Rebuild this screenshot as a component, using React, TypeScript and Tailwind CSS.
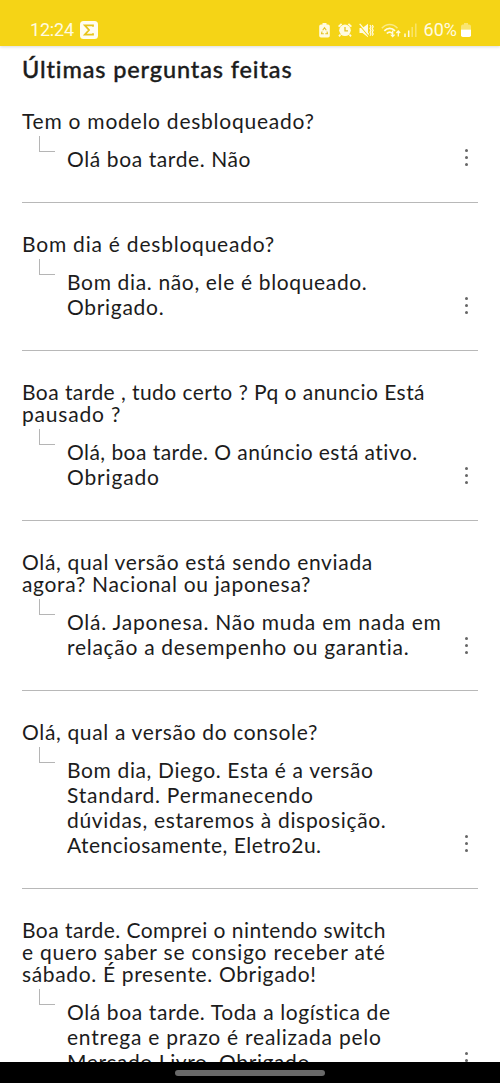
import React from 'react';

interface Line {
  text: string;
  tracking: string;
}

interface Question {
  question: Line[];
  answer: Line[];
}

const questions: Question[] = [
  {
    question: [{ text: 'Tem o modelo desbloqueado?', tracking: 'tracking-[0.75px]' }],
    answer: [{ text: 'Olá boa tarde. Não', tracking: 'tracking-[0.6px]' }],
  },
  {
    question: [{ text: 'Bom dia é desbloqueado?', tracking: 'tracking-[0.78px]' }],
    answer: [
      { text: 'Bom dia. não, ele é bloqueado.', tracking: 'tracking-[0.65px]' },
      { text: 'Obrigado.', tracking: 'tracking-[0.7px]' },
    ],
  },
  {
    question: [
      { text: 'Boa tarde , tudo certo ? Pq o anuncio Está', tracking: 'tracking-[0.44px]' },
      { text: 'pausado ?', tracking: 'tracking-[0.8px]' },
    ],
    answer: [
      { text: 'Olá, boa tarde. O anúncio está ativo.', tracking: 'tracking-[0.45px]' },
      { text: 'Obrigado', tracking: 'tracking-[0.85px]' },
    ],
  },
  {
    question: [
      { text: 'Olá, qual versão está sendo enviada', tracking: 'tracking-[0.67px]' },
      { text: 'agora? Nacional ou japonesa?', tracking: 'tracking-[0.67px]' },
    ],
    answer: [
      { text: 'Olá. Japonesa. Não muda em nada em', tracking: 'tracking-[0.76px]' },
      { text: 'relação a desempenho ou garantia.', tracking: 'tracking-[0.71px]' },
    ],
  },
  {
    question: [{ text: 'Olá, qual a versão do console?', tracking: 'tracking-[0.66px]' }],
    answer: [
      { text: 'Bom dia, Diego. Esta é a versão', tracking: 'tracking-[0.63px]' },
      { text: 'Standard. Permanecendo', tracking: 'tracking-[0.77px]' },
      { text: 'dúvidas, estaremos à disposição.', tracking: 'tracking-[0.68px]' },
      { text: 'Atenciosamente, Eletro2u.', tracking: 'tracking-[0.48px]' },
    ],
  },
  {
    question: [
      { text: 'Boa tarde. Comprei o nintendo switch', tracking: 'tracking-[0.45px]' },
      { text: 'e quero saber se consigo receber até', tracking: 'tracking-[0.79px]' },
      { text: 'sábado. É presente. Obrigado!', tracking: 'tracking-[0.65px]' },
    ],
    answer: [
      { text: 'Olá boa tarde. Toda a logística de', tracking: 'tracking-[0.61px]' },
      { text: 'entrega e prazo é realizada pelo', tracking: 'tracking-[0.76px]' },
      { text: 'Mercado Livro. Obrigado', tracking: 'tracking-[0.6px]' },
    ],
  },
];

function StatusBar() {
  return (
    <header className="relative z-10 flex h-[46px] shrink-0 items-end justify-between bg-[#f5d416] pr-[29px] pb-[7px] pl-[30px] text-[#fffbe0] shadow-[0_1px_3px_rgba(0,0,0,0.15)]">
      <div className="flex items-center gap-[6px]">
        <span className="font-[Roboto] text-[18px] leading-[18px] tracking-[-0.2px]">12:24</span>
        <svg width="18" height="18" viewBox="0 0 18 18">
          <rect width="18" height="18" rx="3.5" fill="#fffdf0" />
          <path d="M13 5.8V4.3H4.8L9 9l-4.2 4.7H13v-1.5" fill="none" stroke="#e8c51a" strokeWidth="1.8" />
        </svg>
      </div>
      <div className="flex items-center">
        {/* Battery saver */}
        <svg width="11" height="15" viewBox="0 0 11 15" className="mr-[8px]">
          <path d="M3.5 0h4v1.5H9A1.8 1.8 0 0 1 10.8 3.3v9.4A1.8 1.8 0 0 1 9 14.5H2A1.8 1.8 0 0 1 .2 12.7V3.3A1.8 1.8 0 0 1 2 1.5h1.5z" fill="currentColor" />
          <path d="m3.7 7.2 1.8-2.5 1.8 2.5M8 8.5l.5 2.3H6.3M4.8 10.8H2.5L3 8.5" fill="none" stroke="#e5c322" strokeWidth="1.1" />
        </svg>
        {/* Alarm */}
        <svg width="14" height="14" viewBox="0 0 14 14" className="mr-[7px]">
          <circle cx="7" cy="7.3" r="5.8" fill="currentColor" />
          <path d="M.6 3.6 3.6.8M13.4 3.6 10.4.8M2.5 11.5 1 13.3M11.5 11.5 13 13.3" stroke="currentColor" strokeWidth="1.8" />
          <path d="M7 4v3.8h3" fill="none" stroke="#e5c322" strokeWidth="1.3" />
        </svg>
        {/* Muted with vibration */}
        <svg width="15" height="15" viewBox="0 0 15 15" className="mr-[7px]">
          <path d="M.5 5h3L9 .8v13.4L3.5 10h-3z" fill="currentColor" />
          <path d="M0 1.5 10.5 14" stroke="#f5d416" strokeWidth="1.2" />
          <path d="m.7.8 9 10.7" stroke="currentColor" strokeWidth="1.3" />
          <path d="m11 2 1 1.8-1 1.8 1 1.8-1 1.8 1 1.8-1 1.8M13.2 2l1 1.8-1 1.8 1 1.8-1 1.8 1 1.8-1 1.8" fill="none" stroke="currentColor" strokeWidth="1.2" />
        </svg>
        {/* Wi-Fi */}
        <svg width="20" height="15" viewBox="0 0 20 15" className="mr-[3px]">
          <path d="M.8 5.2C5.5.3 12 .3 16.5 5.2" fill="none" stroke="currentColor" strokeWidth="1.5" opacity=".55" />
          <path d="M3.3 7.9c3.2-3.3 7.6-3.3 10.7 0M5.8 10.5c1.7-1.8 4-1.8 5.7 0" fill="none" stroke="currentColor" strokeWidth="1.7" />
          <path d="M11.7 7.5v6M9.8 11.6l1.9 2 1.9-2M17.3 13.5V8M15.4 10l1.9-2 1.9 2" fill="none" stroke="currentColor" strokeWidth="1.3" />
        </svg>
        {/* Signal */}
        <svg width="13" height="14" viewBox="0 0 13 14" className="mr-[7px]">
          <path d="M1 10.5V14M4.7 7.5V14" stroke="currentColor" strokeWidth="1.5" />
          <path d="M8.2 4v10M11.8.5V14" stroke="currentColor" strokeWidth="1.4" opacity=".45" />
        </svg>
        <span className="mr-[4px] font-[Roboto] text-[18px] leading-[18px]">60%</span>
        <svg width="10" height="14" viewBox="0 0 10 14">
          <path d="M3 0h4v1.5h1.2Q10 1.5 10 3.5V6.5H0v-3Q0 1.5 1.8 1.5H3z" fill="currentColor" opacity=".45" />
          <path d="M0 6.5h10v5.7q0 1.8-1.8 1.8H1.8Q0 14 0 12.2z" fill="#fff" />
        </svg>
      </div>
    </header>
  );
}

function QuestionItem({ question, answer }: Question) {
  return (
    <li className="shrink-0 border-b border-[#b8b8b8] pb-[31px]">
      <div className="text-[21px] leading-[22px]">
        {question.map((line) => (
          <p key={line.text} className={`whitespace-nowrap ${line.tracking}`}>
            {line.text}
          </p>
        ))}
      </div>
      <div className="flex">
        <span className="mt-[4px] ml-[17px] h-[16px] w-[16px] shrink-0 border-b border-l border-[#b5b5b5]" />
        <div className="mt-[14px] ml-[12px] flex-1 text-[21px] leading-[25px]">
          {answer.map((line) => (
            <p key={line.text} className={`whitespace-nowrap ${line.tracking}`}>
              {line.text}
            </p>
          ))}
        </div>
        <button className="mr-[10px] mb-[5px] flex flex-col gap-[3.5px] self-end" aria-label="Opções">
          <i className="size-[3.5px] rounded-full bg-[#666]" />
          <i className="size-[3.5px] rounded-full bg-[#666]" />
          <i className="size-[3.5px] rounded-full bg-[#666]" />
        </button>
      </div>
    </li>
  );
}

export default function App() {
  return (
    <div className="flex h-[1083px] w-[500px] flex-col overflow-hidden bg-white font-[Lato,sans-serif] text-[#1c1c1c]">
      <StatusBar />
      <main className="min-h-0 flex-1 overflow-hidden px-[22px]">
        <h1 className="mt-[9px] text-[23.5px] leading-[28px] font-medium tracking-[0.87px] whitespace-nowrap [-webkit-text-stroke:0.35px]">
          Últimas perguntas feitas
        </h1>
        <ul className="mt-[27px] flex flex-col gap-[30px]">
          {questions.map((item) => (
            <QuestionItem key={item.question[0].text} {...item} />
          ))}
        </ul>
      </main>
      <footer className="flex h-[21px] shrink-0 items-center justify-center bg-black">
        <div className="h-[6px] w-[150px] rounded-full bg-[#696969]" />
      </footer>
    </div>
  );
}
